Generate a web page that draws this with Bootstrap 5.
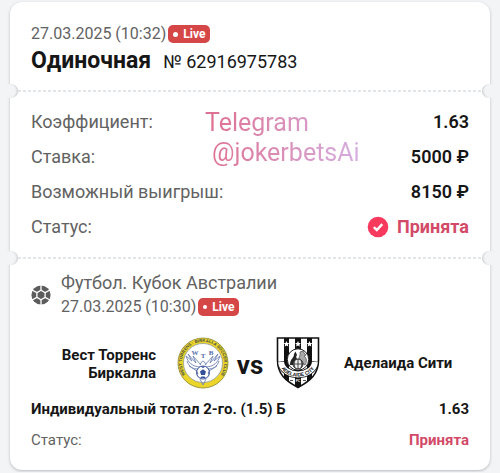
<!DOCTYPE html>
<html lang="ru">
<head>
<meta charset="utf-8">
<meta name="viewport" content="width=device-width, initial-scale=1">
<title>Одиночная ставка</title>
<link href="https://cdn.jsdelivr.net/npm/bootstrap@5.3.0/dist/css/bootstrap.min.css" rel="stylesheet">
<style>
  body { background: #f3f4f6; color: #161616; font-family: Roboto, "Liberation Sans", sans-serif; font-size: 15px; line-height: 20px; padding: 2px 10px; }
  .slip { background: #fff; border-radius: 12px; box-shadow: 0 1px 3px rgba(40, 50, 60, .3); }
  .slip-part { padding: 0 21px; }
  .slip-head { padding-top: 20px; padding-bottom: 13px; }
  .slip-event { padding-top: 11px; padding-bottom: 20px; }
  .muted { color: #626262; }
  .stamp { font-size: 16px; line-height: 24px; }
  .live { background: #d54747; color: #fff; font-size: 12px; font-weight: 700; line-height: 18px; border-radius: 5px; padding: 0 5px; margin-left: 2px; }
  .live::before { content: ""; width: 5px; height: 5px; border-radius: 50%; background: #fff; margin-right: 5px; }
  .live-small::before { width: 4px; height: 4px; }
  .slip-title { font-size: 23px; line-height: 30px; font-weight: 700; }
  .slip-number { font-size: 18px; line-height: 30px; }
  .tear { height: 2px; margin: 0 8px; background: repeating-linear-gradient(90deg, #e2e6e9 0 3px, transparent 3px 5px); }
  .tear-wrap { position: relative; z-index: 1; }
  .notch { position: absolute; top: -6px; width: 12px; height: 14px; background: #f3f4f6; }
  .notch-left { left: -4px; border-radius: 0 7px 7px 0; box-shadow: inset -2px 0 2px -1px #c6cacd; }
  .notch-right { right: -4px; border-radius: 7px 0 0 7px; box-shadow: inset 2px 0 2px -1px #c6cacd; }
  .details { padding-top: 12px; padding-bottom: 13px; font-size: 18px; line-height: 35px; }
  .accepted { color: #d24a68; font-weight: 700; }
  .value { font-weight: 600; }
  .bet { font-weight: 700; margin-top: 10px; margin-bottom: 11px; }
  .watermark { position: absolute; left: 195px; top: 16px; font-size: 25px; line-height: 30px; color: transparent; background: linear-gradient(90deg, #df6f8f, #d5aee2); -webkit-background-clip: text; background-clip: text; }
  .watermark span { padding-left: 7px; }
  .league { font-size: 18px; line-height: 25px; }
  .league-info { margin-left: 10px; }
  .teams { margin-top: 18px; font-weight: 700; line-height: 18px; }
  .team-home { width: 125px; padding-top: 2px; }
  .versus { font-size: 26px; line-height: 48px; width: 36px; padding-top: 4px; }
  .crest-text { font-family: "Liberation Sans", sans-serif; font-weight: 700; }
</style>
<script src="https://cdn.jsdelivr.net/npm/bootstrap@5.3.0/dist/js/bootstrap.bundle.min.js"></script>
</head>
<body>
<main class="slip">
  <header class="slip-part slip-head">
    <div class="d-flex align-items-center muted stamp"><time datetime="2025-03-27T10:32">27.03.2025 (10:32)</time><span class="live d-inline-flex align-items-center">Live</span></div>
    <div class="d-flex align-items-baseline"><h1 class="slip-title mb-0">Одиночная</h1><span class="slip-number ms-2 ps-1">№ 62916975783</span></div>
  </header>
  <div class="tear-wrap"><div class="tear"></div><span class="notch notch-left"></span><span class="notch notch-right"></span></div>
  <section class="slip-part details position-relative">
    <div class="d-flex justify-content-between"><span class="muted">Коэффициент:</span><span class="value">1.63</span></div>
    <div class="d-flex justify-content-between"><span class="muted">Ставка:</span><span class="value">5000 ₽</span></div>
    <div class="d-flex justify-content-between"><span class="muted">Возможный выигрыш:</span><span class="value">8150 ₽</span></div>
    <div class="d-flex justify-content-between"><span class="muted">Статус:</span>
      <span class="accepted d-flex align-items-center"><svg class="me-2" width="22" height="22" viewBox="0 0 22 22" aria-hidden="true"><circle cx="11" cy="11" r="10.3" fill="#f7395d"/><path d="M6.8 11.2l3 2.8 5.5-5.8" fill="none" stroke="#fff" stroke-width="2.4"/></svg>Принята</span></div>
    <div class="watermark">Telegram<br><span>@jokerbetsAi</span></div>
  </section>
  <div class="tear-wrap"><div class="tear"></div><span class="notch notch-left"></span><span class="notch notch-right"></span></div>
  <section class="slip-part slip-event">
    <div class="d-flex align-items-center muted">
      <svg width="20" height="20" viewBox="0 0 20 20" aria-hidden="true"><circle cx="10" cy="10" r="9.6" fill="#5c5c5c"/><g stroke="#fff" stroke-width="1.3" fill="none"><path d="M10 5.2l4.100 2.400v4.800L10 14.800l-4.100-2.400V7.600z"/><path d="M10 0v2.500M10 17.500V20M1 5l4.900 2.600M19 5l-4.900 2.600M1 15l4.900-2.600M19 15l-4.900-2.600M10 2.500v2.700M10 14.800v2.700"/></g></svg>
      <div class="league-info">
        <div class="league">Футбол. Кубок Австралии</div>
        <div class="d-flex align-items-center stamp"><time datetime="2025-03-27T10:30">27.03.2025 (10:30)</time><span class="live live-small d-inline-flex align-items-center">Live</span></div>
      </div>
    </div>
    <div class="teams d-flex align-items-center">
      <div class="team-home text-end">Вест Торренс<br>Биркалла</div>
      <svg class="ms-3 flex-shrink-0" width="60" height="52" viewBox="0 0 60 52" role="img" aria-label="West Torrens Birkalla Soccer Club">
        <defs><path id="ring" d="M15.100 40.100A21.200 21.200 0 1 1 46.900 40.100"/></defs>
        <circle cx="31" cy="26" r="25" fill="#ecd52b" stroke="#87842f" stroke-width=".8"/>
        <circle cx="31" cy="26" r="19.500" fill="#fff" stroke="#8290a0" stroke-width=".7"/>
        <text class="crest-text" font-size="4.200" fill="#3c4a4a"><textPath href="#ring" startOffset="50%" text-anchor="middle">WEST TORRENS · BIRKALLA SOCCER CLUB</textPath></text>
        <g fill="none" stroke="#6f84b6" stroke-width=".9"><path d="M29 30C20 30 16 25 14 19l6 5-4-7 8 9-3-7 8 9M33 30c9 0 13-5 15-11l-6 5 4-7-8 9 3-7-8 9"/><path d="M15 24c2 6 6 8 11 8M47 24c-2 6-6 8-11 8M17 29l8 5M45 29l-8 5M28 28q3-8 6 0M28 42l3 6 3-6"/></g>
        <circle cx="31" cy="35.500" r="6.500" fill="#fff" stroke="#354f98" stroke-width="1"/>
        <path d="M31 32.300l3 2.200-1.100 3.600h-3.800L28 34.500zM28.500 29.600h5L31 31zM24.800 34l1.500 2-.6 2zM37.200 34l-1.500 2 .6 2zM28 41l1.500-1.500h3L34 41z" fill="#354f98"/>
        <g font-family="Liberation Serif, serif" font-size="7" fill="#536ca8" text-anchor="middle"><text x="23" y="18">W</text><text x="31" y="21">T</text><text x="39" y="18">B</text></g>
      </svg>
      <div class="versus text-center">vs</div>
      <svg class="flex-shrink-0" width="60" height="52" viewBox="0 0 60 52" role="img" aria-label="Adelaide City">
        <defs><clipPath id="shield"><path d="M9.500 1h41v22c0 14-8 21-20.500 27.500C17.500 44 9.500 37 9.500 23z"/></clipPath><path id="ribbon" d="M13 29C16 43 44 43 47 29"/></defs>
        <g clip-path="url(#shield)"><path fill="#fff" d="M8 0h44v52H8z"/><path fill="#111" d="M16 0h5v52h-5zM27 0h6v52h-6zM39 0h5v52h-5z"/></g>
        <path d="M9.500 1h41v22c0 14-8 21-20.500 27.500C17.500 44 9.500 37 9.500 23z" fill="none" stroke="#111" stroke-width="1.600"/>
        <path id="star" fill="#fff" d="M18.500 4l.9 1.900 2 .2-1.500 1.400.4 2-1.800-1-1.800 1 .4-2-1.500-1.400 2-.2z"/><use href="#star" x="11.500"/><use href="#star" x="23"/>
        <circle cx="30" cy="22.500" r="10.700" fill="#fff" stroke="#222" stroke-width="1"/>
        <path d="M22 28c0-7 4-6 4-11l1.500-2.500 1.500 3.500-1 2c2 2 0 5 1 8z" fill="#222"/>
        <path d="M31 24c-1-4 2-5 1-9l3-1 1 2 2 2-2 1c3 2 3 6 1 9z" fill="#aaa" stroke="#555" stroke-width=".8"/>
        <circle cx="30" cy="27" r="5" fill="#eee" stroke="#222"/><path d="M25 27h10M30 22v10M27 23q-2 4 0 8M33 23q2 4 0 8" fill="none" stroke="#222" stroke-width=".8"/>
        <path d="M13 24.500C15 41.500 45 41.500 47 24.500" fill="none" stroke="#111" stroke-width="7.600"/>
        <path d="M13 25C15 41.500 45 41.500 47 25" fill="none" stroke="#fff" stroke-width="6"/>
        <text class="crest-text" font-size="5" fill="#111"><textPath href="#ribbon" startOffset="50%" text-anchor="middle">ADELAIDE CITY</textPath></text>
        <text class="crest-text" x="30" y="45" text-anchor="middle" font-size="3.500" fill="#fff">FC</text>
        <path d="M22 43.500h3M35 43.500h3" stroke="#555"/>
      </svg>
      <div class="ms-3">Аделаида Сити</div>
    </div>
    <div class="d-flex justify-content-between bet"><span>Индивидуальный тотал 2-го. (1.5) Б</span><span>1.63</span></div>
    <div class="d-flex justify-content-between"><span class="muted">Статус:</span><span class="accepted">Принята</span></div>
  </section>
</main>
</body>
</html>
